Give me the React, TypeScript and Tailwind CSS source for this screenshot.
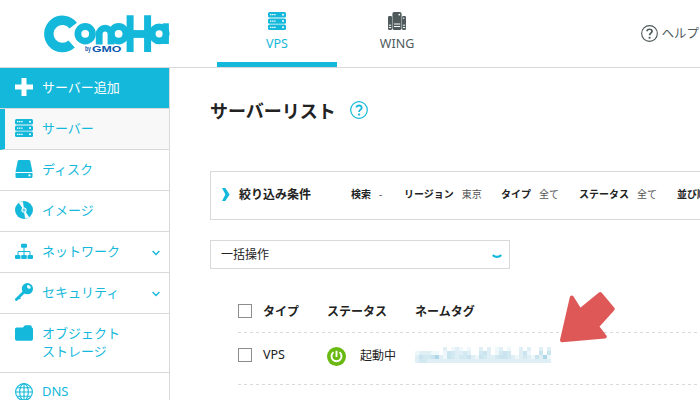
import React from "react";

const Logo = () => (
  <svg className="block h-[40px] w-[126px]" viewBox="44 14 126 40" role="img" aria-label="ConoHa by GMO">
    <g fill="none" stroke="#14b8da">
      <path d="M73.2 25.6A13.6 13.6 0 1 0 71.6 44" strokeWidth="9.4" />
      <circle cx="85.2" cy="33.8" r="7.3" strokeWidth="9.4" stroke="#fff" />
      <circle cx="85.2" cy="33.8" r="7.3" strokeWidth="6.8" />
      <path d="M99.2 44.5V34a5.9 5.9 0 0 1 11.8 0V44.5" strokeWidth="6.8" />
      <circle cx="118.6" cy="33.8" r="7.3" strokeWidth="6.8" />
      <path d="M130.1 15.3V52M147.6 15.3V52" strokeWidth="7" />
      <path d="M130 34h18" strokeWidth="7.8" />
      <circle cx="159.2" cy="33.8" r="7" strokeWidth="6.8" />
      <path d="M165.8 23.3V44" strokeWidth="6.2" />
    </g>
    <path d="M84 45.2h38V53.5H84Z" fill="#fff" />
    <g fontFamily="'Liberation Sans', sans-serif" fontWeight="bold" fill="#0a58ac">
      <text x="85" y="51.4" fontSize="7" textLength="5.8" lengthAdjust="spacingAndGlyphs">by</text>
      <text x="92" y="52.2" fontSize="9" textLength="29.4" lengthAdjust="spacingAndGlyphs">GMO</text>
    </g>
  </svg>
);

const ServerIcon = () => (
  <svg className="block size-[18px]" viewBox="0 0 18 18" fill="currentColor">
    {[0, 6.4, 12.6].map((y) => (
      <g key={y}>
        <rect y={y} width="18" height="5.4" rx="1.5" />
        <path d={`M2 ${y + 2.7}h1.4m.7 0h1.4m.7 0h1.4`} stroke="#fff" strokeWidth="1.3" />
        <circle cx="15" cy={y + 2.7} r="1" fill="#fff" />
      </g>
    ))}
  </svg>
);

const WingIcon = () => (
  <svg className="block size-[18px]" viewBox="0 0 18 18" fill="#4e5a5b">
    <rect x="0" y="4" width="4" height="14" rx="1.2" />
    <rect x="14" y="4" width="4" height="14" rx="1.2" />
    <rect x="4.4" y="0" width="9.2" height="18" rx="1.8" />
    <path d="M6 12h6.2M6 14.5h6.2M0.8 13.2h2.4M.8 15.6h2.4M14.8 13.2h2.4M14.8 15.6h2.4" stroke="#fff" strokeWidth="1" />
    <circle cx="11.3" cy="2.6" r=".9" fill="#fff" />
    <path d="M14.8 6.2h1.6" stroke="#fff" strokeWidth="1" />
  </svg>
);

const PlusIcon = () => (
  <svg className="block size-[18px]" viewBox="0 0 18 18"><path d="M9 0v18M0 9h18" stroke="#fff" strokeWidth="5" /></svg>
);

const DiskIcon = () => (
  <svg className="block size-[18px]" viewBox="0 0 18 18" fill="currentColor">
    <path d="M4.2 0h9.6q1.2 0 1.5 1.2L17.5 12H.5L2.7 1.2Q3 0 4.2 0Z" />
    <path d="M.5 13h17v3.4q0 1.6-1.6 1.6H2.1Q.5 18 .5 16.4Z" />
    <circle cx="14.5" cy="15.4" r="1.1" fill="#fff" />
  </svg>
);

const DiscIcon = () => (
  <svg className="block size-[18px]" viewBox="0 0 18 18">
    <circle cx="9" cy="9" r="9" fill="currentColor" />
    <path d="M9 9 4 1.8 7.6.8ZM9 9l5 7.2-3.6 1Z" fill="#fff" stroke="#fff" strokeWidth=".5" />
    <circle cx="9" cy="9" r="2.6" fill="#fff" />
    <circle cx="9" cy="9" r="1.5" fill="#14b8da" />
    <circle cx="9" cy="9" r=".7" fill="#fff" />
  </svg>
);

const NetworkIcon = () => (
  <svg className="block size-[18px]" viewBox="0 0 18 18" fill="currentColor">
    <rect x="6" y="1.7" width="6" height="4" rx="1" />
    <rect x="0" y="13" width="5.5" height="4" rx="1" />
    <rect x="6.2" y="13" width="5.6" height="4" rx="1" />
    <rect x="12.5" y="13" width="5.5" height="4" rx="1" />
    <path d="M9 5v9M3 14V9.5h12V14" fill="none" stroke="currentColor" strokeWidth="1" />
  </svg>
);

const KeyIcon = () => (
  <svg className="block size-[18px]" viewBox="0 0 18 18">
    <circle cx="12.4" cy="5.7" r="5.6" fill="currentColor" />
    <path d="M9.5 8.4 1.4 16.5" stroke="currentColor" strokeWidth="2.8" strokeLinecap="round" />
    <path d="m3.6 14.2 1.7 1.6" stroke="currentColor" strokeWidth="1.6" />
    <ellipse cx="13.8" cy="3.9" rx="2.1" ry="1.5" fill="#fff" transform="rotate(35 13.8 3.9)" />
  </svg>
);

const FolderIcon = () => (
  <svg className="block size-[18px]" viewBox="0 0 18 18" fill="currentColor">
    <path d="M0 4.3Q0 2.8 1.5 2.8H8L9.4 1q.4-.5 1-.5h5q1 0 1.2 1l.2 1.3q1.2.1 1.2 1.5v10q0 1.7-1.7 1.7H1.7Q0 16 0 14.3Z" transform="translate(0 .7)" />
  </svg>
);

const GlobeIcon = () => (
  <svg className="block size-[18px]" viewBox="0 0 18 18" fill="none" stroke="currentColor" strokeWidth="1.1">
    <circle cx="9" cy="9" r="8.4" />
    <ellipse cx="9" cy="9" rx="4.3" ry="8.4" />
    <path d="M9 .5v17M.5 9h17M2 4.7h14M2 13.3h14" />
  </svg>
);

const HelpIcon = ({ className }: { className: string }) => (
  <svg className={className} viewBox="0 0 18 18" fill="none" stroke="currentColor">
    <circle cx="9" cy="9" r="8.3" strokeWidth="1.2" />
    <path d="M6.4 6.6C6.4 3.8 11.7 3.7 11.7 6.7c0 2-2.6 1.9-2.6 4.2" strokeWidth="1.8" />
    <path d="M8.1 13.5h2" strokeWidth="1.9" />
  </svg>
);

const Chevron = () => (
  <svg className="ml-auto mr-[9px] mt-[4px] h-[6px] w-[8px]" viewBox="0 0 8 6">
    <path d="m.6 1 3.4 3.6L7.4 1" fill="none" stroke="currentColor" strokeWidth="1.4" />
  </svg>
);

const menu = [
  { label: "サーバー", Icon: ServerIcon, active: true },
  { label: "ディスク", Icon: DiskIcon },
  { label: "イメージ", Icon: DiscIcon },
  { label: "ネットワーク", Icon: NetworkIcon, expandable: true },
  { label: "セキュリティ", Icon: KeyIcon, expandable: true },
];

const filters = [
  ["検索", "-", "w-[53px]"],
  ["リージョン", "東京", "w-[97px]"],
  ["タイプ", "全て", "w-[78px]"],
  ["ステータス", "全て", "w-[98px]"],
  ["並び順", "", "w-[60px]"],
];

// Pixelated name tag: each digit picks a tint, 0 leaves the cell blank.
const mosaic = [
  "0000000201210100202012010020200202",
  "1222110143223200342013430024100404",
  "2433452143233421432234432123214251",
  "2332222222222222222222222222222222",
];
const tints = ["bg-transparent", "bg-[#eef7fa]", "bg-[#e0eff6]", "bg-[#d3e9f1]", "bg-[#c9e4ee]", "bg-[#aed6e8]"];

const Checkbox = () => <span className="block size-[14px] shrink-0 border border-[#8d8d8d] bg-white" />;

const DashedRule = () => (
  <div className="h-px bg-[repeating-linear-gradient(90deg,#d9d9d9_0_3px,transparent_3px_6px)]" />
);

export default function App() {
  return (
    <div className="relative h-[400px] w-[700px] overflow-hidden bg-white font-['Noto_Sans','Noto_Sans_CJK_JP',sans-serif] text-[#222]">
      <header className="flex h-[68px] border-b border-[#d9d9d9]">
        <div className="w-[217px] pl-[44px] pt-[14px]"><Logo /></div>
        <nav className="flex text-[12.5px] leading-[16px]">
          <div className="flex h-[67px] w-[120px] flex-col items-center border-b-[5px] border-[#14b8da] pt-[12px] text-[#14b8da]">
            <ServerIcon /><span className="mt-[6px]">VPS</span>
          </div>
          <div className="flex h-[67px] w-[120px] flex-col items-center pt-[12px] text-[#4e5a5b]">
            <WingIcon /><span className="mt-[6px]">WING</span>
          </div>
        </nav>
        <div className="ml-auto flex h-[67px] shrink-0 items-center text-[#4e5a5b]">
          <HelpIcon className="mr-[3px] size-[17px]" />
          <span className="mr-px mt-[2px] whitespace-nowrap text-[12.5px]">ヘルプ</span>
        </div>
      </header>

      <div className="flex h-[332px]">
        <aside className="w-[170px] shrink-0 border-r border-[#d9d9d9] text-[13px] leading-[18px] text-[#14b8da]">
          <div className="flex h-[41px] items-center gap-[9px] border-b border-[#d9d9d9] bg-[#14b8da] pb-[2px] pl-[15px] text-white">
            <PlusIcon />サーバー追加
          </div>
          {menu.map(({ label, Icon, active, expandable }) => (
            <div
              key={label}
              className={
                active
                  ? "flex h-[41px] items-center gap-[9px] border-b border-l-[5px] border-b-[#d9d9d9] border-l-[#14b8da] bg-[#f8f8f8] pb-[2px] pl-[10px]"
                  : "flex h-[41px] items-center gap-[9px] border-b border-[#d9d9d9] pb-[2px] pl-[15px]"
              }
            >
              <Icon />
              <span className="whitespace-nowrap">{label}</span>
              {expandable && <Chevron />}
            </div>
          ))}
          <div className="flex h-[59px] gap-[9px] border-b border-[#d9d9d9] pl-[15px] pt-[10px]">
            <FolderIcon />
            <span>オブジェクト<br />ストレージ</span>
          </div>
          <div className="flex gap-[9px] pl-[15px] pt-[10px]">
            <GlobeIcon /><span className="leading-[17px]">DNS</span>
          </div>
        </aside>

        <main className="min-w-0 flex-1 overflow-hidden pl-[40px]">
          <div className="flex h-[103px] items-start pt-[30px]">
            <h1 className="pt-px text-[18px] font-bold leading-[24px]">サーバーリスト</h1>
            <HelpIcon className="ml-[14px] mt-[3px] size-[18px] text-[#14b8da]" />
          </div>

          <div className="flex h-[49px] w-[520px] items-center border border-[#d9d9d9] pl-[11px]">
            <svg className="-mt-[2px] h-[13px] w-[8px] shrink-0" viewBox="0 0 8 13">
              <path d="M0 0h3.3L7.6 6.5 3.3 13H0l3.4-6.5Z" fill="#14b8da" />
            </svg>
            <span className="-mt-px ml-[9px] w-[112px] shrink-0 text-[12px] font-bold">絞り込み条件</span>
            {filters.map(([name, value, width]) => (
              <div key={name} className={`${width} -mt-[2px] flex shrink-0 gap-[8px] whitespace-nowrap text-[10px]`}>
                <b>{name}</b><span className="text-[#555]">{value}</span>
              </div>
            ))}
          </div>

          <div className="mt-[20px] flex h-[29px] w-[300px] items-center border border-[#d9d9d9] pl-[10px] pr-[7px] text-[12px]">
            <span>一括操作</span>
            <svg className="ml-auto mt-[4px] h-[5px] w-[10px]" viewBox="0 0 10 5">
              <path d="M.7 1.1Q5 4.7 9.3 1.1" fill="none" stroke="#14b8da" strokeWidth="2.1" />
            </svg>
          </div>

          <div className="ml-[28px] mt-[30px] text-[12px]">
            <div className="flex h-[33px] items-start font-bold leading-[18px]">
              <div className="pt-[5px]"><Checkbox /></div>
              <span className="ml-[11px] w-[64px] pt-[4px]">タイプ</span>
              <span className="w-[88px] pt-[4px]">ステータス</span>
              <span className="pt-[4px]">ネームタグ</span>
            </div>
            <DashedRule />
            <div className="flex h-[51px] items-start leading-[18px]">
              <div className="pt-[15px]"><Checkbox /></div>
              <span className="ml-[11px] w-[64px] pt-[13px] text-[12.5px]">VPS</span>
              <svg className="mt-[14px] size-[19px]" viewBox="0 0 19 19">
                <circle cx="9.5" cy="9.5" r="9.5" fill="#6ab913" />
                <path d="M6.5 5.3A5 5 0 1 0 12.5 5.3M9.5 3.8V10" fill="none" stroke="#fff" strokeWidth="1.9" />
              </svg>
              <span className="ml-[14px] w-[55px] pt-[14px]">起動中</span>
              <div className="mt-[14px]">
                {mosaic.map((row, y) => (
                  <div key={y} className="flex">
                    {row.split("").map((c, x) => <span key={x} className={`size-[4px] ${tints[Number(c)]}`} />)}
                  </div>
                ))}
              </div>
            </div>
            <DashedRule />
          </div>
        </main>
      </div>

      <svg className="absolute left-[558px] top-[290px] h-[55px] w-[60px]" viewBox="558 290 60 55">
        <path
          d="M571.8 297.5 562 340.3 604.8 336.6 597 326.5 612.8 309 600.2 294 580 310.5Z"
          fill="#df5858" stroke="#df5858" strokeWidth="4" strokeLinejoin="round"
        />
      </svg>
    </div>
  );
}
